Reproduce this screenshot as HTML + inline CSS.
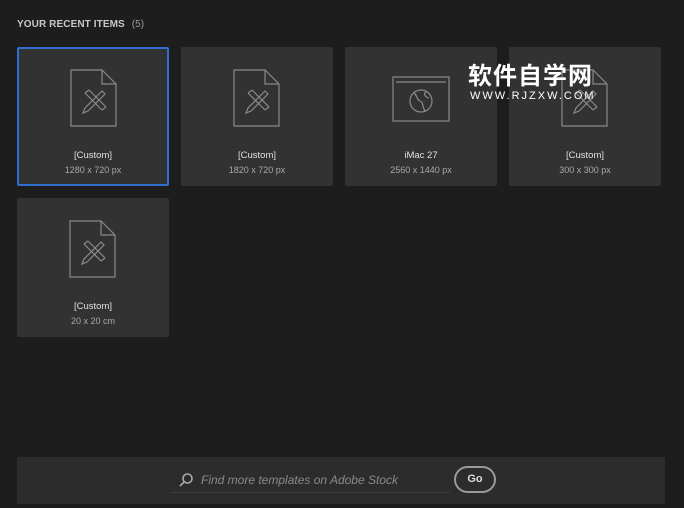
<!DOCTYPE html>
<html><head><meta charset="utf-8"><style>
body{margin:0;width:684px;height:508px;background:#1d1d1d;font-family:"Liberation Sans","Noto Sans CJK SC",sans-serif;position:relative;overflow:hidden}
.h{position:absolute;left:17px;top:19px;font-size:10px;font-weight:bold;color:#c8c8c8;letter-spacing:0.1px}
.h span{font-weight:normal;color:#9a9a9a;margin-left:4px}
.c{position:absolute;width:152px;height:139px;background:#323232;border-radius:2px;box-sizing:border-box}
.c.sel{border:2px solid #2f6fd0}
.c svg{position:absolute;left:52px;top:22px}
.t{position:absolute;left:0;right:0;top:103px;text-align:center;font-size:9.5px;color:#e0e0e0}
.s{position:absolute;left:0;right:0;top:118px;text-align:center;font-size:9px;color:#a8a8a8}
.bar{position:absolute;left:17px;top:457px;width:648px;height:47px;background:#2c2c2c;border-radius:2px}
.wm{position:absolute;left:468px;top:64px;color:#fff;font-size:24px;font-weight:bold;letter-spacing:1px;line-height:26px}
.wm2{position:absolute;left:470px;top:90px;color:#fff;font-size:11px;letter-spacing:2px;font-family:"Liberation Sans",sans-serif}
</style></head><body>
<div class="h">YOUR RECENT ITEMS <span>(5)</span></div>

<svg width="0" height="0" style="position:absolute"><defs>
<g id="doc" fill="none" stroke="#8a8a8a" stroke-width="1.2"><path d="M1 1H32L46 15V57H1Z"/><path d="M32 1V15H46"/>
<path d="M15 24L32 41M19 21L36 38M15 24L19 21M32 41L36 38"/><path d="M32 22L15 39L13 44L18 42L35 25Z"/></g>
</defs></svg>

<div class="c sel" style="left:17px;top:47px"><svg width="48" height="60" style="left:51px;top:20px"><use href="#doc"/></svg><div class="t" style="top:101px">[Custom]</div><div class="s" style="top:116px">1280 x 720 px</div></div>
<div class="c" style="left:181px;top:47px"><svg width="48" height="60"><use href="#doc"/></svg><div class="t">[Custom]</div><div class="s">1820 x 720 px</div></div>
<div class="c" style="left:345px;top:47px"><svg width="60" height="50" style="left:47px;top:29px" fill="none" stroke="#8a8a8a" stroke-width="1.2"><rect x="1" y="1" width="56" height="44"/><path d="M4 6H54"/><circle cx="29" cy="25" r="11"/><path d="M22 17C26 20 24 23 28 25C32 27 30 31 33 35M34 16C31 18 33 21 37 22"/></svg><div class="t">iMac 27</div><div class="s">2560 x 1440 px</div></div>
<div class="c" style="left:509px;top:47px"><svg width="48" height="60"><use href="#doc"/></svg><div class="t">[Custom]</div><div class="s">300 x 300 px</div></div>
<div class="c" style="left:17px;top:198px"><svg width="48" height="60"><use href="#doc"/></svg><div class="t">[Custom]</div><div class="s">20 x 20 cm</div></div>

<div class="wm">软件自学网</div>
<div class="wm2">WWW.RJZXW.COM</div>

<div class="bar">
<svg width="16" height="16" style="position:absolute;left:161px;top:15px" fill="none" stroke="#aaa" stroke-width="1.6"><circle cx="9.5" cy="6.5" r="4.5"/><path d="M6 10L2 14"/></svg>
<div style="position:absolute;left:184px;top:16px;font-size:12px;font-style:italic;color:#8a8a8a">Find more templates on Adobe Stock</div>
<div style="position:absolute;left:153px;top:35px;width:280px;height:1px;background:#3d3d3d"></div>
<div style="position:absolute;left:437px;top:9px;width:42px;height:27px;border:2px solid #9a9a9a;border-radius:14px;box-sizing:border-box;color:#ddd;font-size:11px;font-weight:bold;text-align:center;line-height:23px">Go</div>
</div>
</body></html>
